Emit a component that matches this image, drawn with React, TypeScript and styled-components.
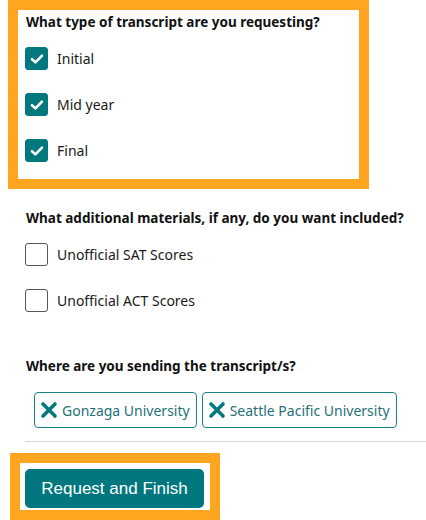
import React from 'react'
import styled, { createGlobalStyle } from 'styled-components'

const Global = createGlobalStyle`
  body { margin: 0; background: #fff; font-family: "Noto Sans", "Open Sans", sans-serif; color: #111; }
`

const Page = styled.div`
  width: 426px;
  height: 520px;
  overflow: hidden;
  display: flex;
  flex-direction: column;
`

const Focus = styled.div`
  margin-left: 8px;
  width: 333px;
  border: 10px solid #ffa51f;
  padding: 2px 0 0 8px;
  height: 167px;
  box-sizing: content-box;
`

const Section = styled.div`
  padding-left: 26px;
  display: flex;
  flex-direction: column;
`

const Heading = styled.div<{ $top?: number }>`
  font-size: 13.5px;
  font-weight: 700;
  line-height: 20px;
  margin-top: ${(p) => p.$top ?? 0}px;
`

const Row = styled.label<{ $gap: number }>`
  display: flex;
  align-items: center;
  height: 23px;
  margin-top: ${(p) => p.$gap}px;
  font-size: 14px;
  color: #1a1a1a;
`

const Box = styled.span<{ $on?: boolean }>`
  width: 23px;
  height: 23px;
  box-sizing: border-box;
  border-radius: 3px;
  margin-left: -1px;
  margin-right: 9px;
  display: flex;
  align-items: center;
  justify-content: center;
  background: ${(p) => (p.$on ? '#00787e' : '#fff')};
  border: 1.5px solid ${(p) => (p.$on ? '#00787e' : '#555')};
`

const Chips = styled.div`
  display: flex;
  gap: 5px;
  margin-top: 16px;
  padding-left: 8px;
`

const Chip = styled.div`
  height: 36px;
  box-sizing: border-box;
  border: 1.5px solid #1a8088;
  border-radius: 4px;
  display: flex;
  align-items: center;
  padding: 0 6px 0 5px;
  gap: 4px;
  font-size: 14px;
  color: #1f7177;
`

const Divider = styled.div`
  margin-top: 13px;
  margin-left: 25px;
  height: 1px;
  background: #d4d4d4;
`

const ButtonFrame = styled.div`
  margin-top: 11px;
  margin-left: 10px;
  width: 185px;
  border: 10px solid #ffa51f;
  padding: 6px 0 0 5px;
  height: 41px;
  box-sizing: content-box;
`

const Button = styled.button`
  width: 179px;
  height: 39px;
  border: none;
  border-radius: 5px;
  background: #00777e;
  color: #fff;
  font-family: "Liberation Sans", Arial, sans-serif;
  font-size: 17px;
  padding: 0;
`

const Check = () => (
  <svg width="14" height="12" viewBox="0 0 14 12">
    <path d="M2 6.2 L5.4 9.4 L12 2.6" fill="none" stroke="#fff" strokeWidth="2.6" strokeLinecap="round" strokeLinejoin="round" />
  </svg>
)

const XIcon = () => (
  <svg width="18" height="18" viewBox="0 0 18 18">
    <path d="M3 3 L15 15 M15 3 L3 15" stroke="#00787e" strokeWidth="3.6" strokeLinecap="round" />
  </svg>
)

export default function App() {
  return (
    <Page>
      <Global />
      <Focus>
        <Heading>What type of transcript are you requesting?</Heading>
        <Row $gap={15}><Box $on><Check /></Box>Initial</Row>
        <Row $gap={23}><Box $on><Check /></Box>Mid year</Row>
        <Row $gap={23}><Box $on><Check /></Box>Final</Row>
      </Focus>
      <Section>
        <Heading $top={19}>What additional materials, if any, do you want included?</Heading>
        <Row $gap={15}><Box />Unofficial SAT Scores</Row>
        <Row $gap={23}><Box />Unofficial ACT Scores</Row>
        <Heading $top={44}>Where are you sending the transcript/s?</Heading>
        <Chips>
          <Chip><XIcon />Gonzaga University</Chip>
          <Chip><XIcon />Seattle Pacific University</Chip>
        </Chips>
      </Section>
      <Divider />
      <ButtonFrame>
        <Button>Request and Finish</Button>
      </ButtonFrame>
    </Page>
  )
}
